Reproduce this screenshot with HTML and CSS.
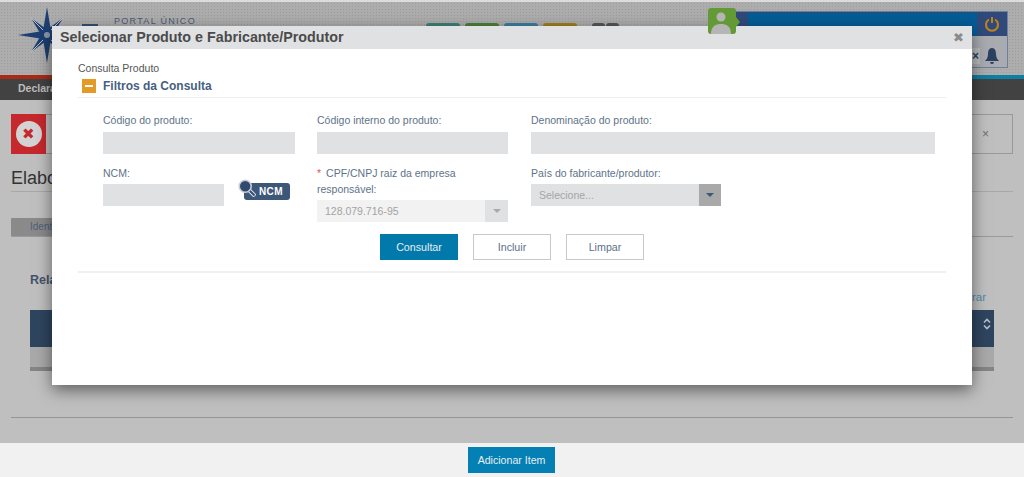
FILE: index.html
```html
<!DOCTYPE html>
<html lang="pt-BR">
<head>
<meta charset="utf-8">
<title>Portal Único</title>
<link rel="stylesheet" href="styles.css">
</head>
<body>
<div class="page">
  <header class="top">
    <div class="brand">
      <svg class="star" viewBox="0 0 58 56" width="58" height="56">
        <path d="M13 11L31 24 25 31zM45 11L27 24 33 31zM13 45L31 32 25 25zM45 45L27 32 33 25z" fill="#1d3f73"/>
        <path d="M13 11L28 26M45 11L30 26M13 45L28 30M45 45L30 30" stroke="#b9c0cc" stroke-width="1"/>
        <path d="M29 0L33 24 58 28 33 32 29 56 25 32 0 28 25 24z" fill="#1d3f73"/>
        <circle cx="29" cy="28" r="3" fill="#8c9ab0"/>
      </svg>
      <span class="brand-mark"></span>
      <span class="brand-text">PORTAL ÚNICO</span>
    </div>
    <div class="tiles">
      <i class="tile t-teal"></i><i class="tile t-green"></i><i class="tile t-blue"></i><i class="tile t-yellow"></i><i class="tile t-dark t-first"></i><i class="tile t-dark"></i>
    </div>
    <div class="user">
      <div class="avatar"><svg viewBox="0 0 28 26" width="28" height="26"><circle cx="13" cy="9" r="4.5" fill="#b5b5b5"/><path d="M3 26c0-8 5-10 10-10s10 2 10 10z" fill="#b5b5b5"/></svg></div>
      <div class="user-box">
        <div class="user-top"><div class="user-bar"></div><svg class="power" viewBox="0 0 16 16" width="16" height="16"><path d="M5 3.5a6 6 0 1 0 6 0M8 1v6" fill="none" stroke="#c2821d" stroke-width="2"/></svg></div>
        <div class="user-low"><span class="user-x">×</span><svg class="bell" viewBox="0 0 14 16" width="14" height="16"><path d="M7 0c3 0 4 3 4 6s1 5 3 7H0c2-2 3-4 3-7s1-6 4-6zM5 14h4a2 2 0 0 1-4 0z" fill="#2c4162"/></svg></div>
      </div>
    </div>
  </header>
  <div class="rule"></div>
  <nav class="nav">Declarações</nav>
  <main class="content">
    <div class="alert">
      <div class="alert-icon"><span class="alert-circle">✖</span></div>
      <span class="alert-close">×</span>
    </div>
    <h1 class="title">Elaborar</h1>
    <div class="tabs"><span class="tab">Identificação</span></div>
    <div class="list-head"><strong class="list-title">Relação</strong><a class="list-link">Filtrar</a></div>
    <div class="table">
      <div class="thead"><svg class="sort" viewBox="0 0 8 12" width="8" height="12"><path d="M1 4.5L4 1.5 7 4.5M1 7.5L4 10.5 7 7.5" fill="none" stroke="#b8bec7" stroke-width="1.6"/></svg></div>
      <div class="tbody"></div>
      <div class="tfoot"></div>
    </div>
    <div class="end-rule"></div>
  </main>
  <footer class="foot"><button class="add-btn">Adicionar Item</button></footer>

  <div class="modal">
    <div class="modal-head"><h2 class="modal-title">Selecionar Produto e Fabricante/Produtor</h2><span class="modal-close">✖</span></div>
    <div class="modal-body">
      <div class="crumb">Consulta Produto</div>
      <div class="section"><span class="collapse"></span><span class="section-title">Filtros da Consulta</span></div>
      <div class="row row-one">
        <div class="field f1"><label>Código do produto:</label><div class="input"></div></div>
        <div class="field f2"><label>Código interno do produto:</label><div class="input"></div></div>
        <div class="field f3"><label>Denominação do produto:</label><div class="input"></div></div>
      </div>
      <div class="row row-two">
        <div class="field f1 ncm-field">
          <label>NCM:</label>
          <div class="ncm-row">
            <div class="input ncm-input"></div>
            <div class="ncm-btn"><svg class="lens" viewBox="0 0 18 18" width="18" height="18"><path d="M11 11l6 6" stroke="#e4e7eb" stroke-width="4"/><path d="M11 11l5.5 5.5" stroke="#2f4a6e" stroke-width="2"/><circle cx="7.2" cy="7.2" r="6" fill="#2f4a6e" stroke="#c9ced6" stroke-width="1.6"/></svg><span class="ncm-tag">NCM</span></div>
          </div>
        </div>
        <div class="field f2">
          <label class="two-line">CPF/CNPJ raiz da empresa responsável:</label>
          <div class="select disabled"><span>128.079.716-95</span><b class="caret"><i></i></b></div>
        </div>
        <div class="field f4">
          <label>País do fabricante/produtor:</label>
          <div class="select pais"><span>Selecione...</span><b class="caret"><i></i></b></div>
        </div>
      </div>
      <div class="actions">
        <button class="btn primary">Consultar</button>
        <button class="btn">Incluir</button>
        <button class="btn">Limpar</button>
      </div>
      <div class="bottom-rule"></div>
    </div>
  </div>
</div>
</body>
</html>
```
FILE: styles.css
```css
* { box-sizing: border-box; }
html, body { margin: 0; padding: 0; }
body { font-family: "Liberation Sans", Arial, sans-serif; background: #bfbfbf; }
.page { position: relative; width: 1024px; height: 477px; overflow: hidden; display: flex; flex-direction: column; }

.top { height: 75px; flex: none; display: flex; align-items: flex-start; border-top: 2px solid #dcdcdc; background-color: #adadad; background-image: radial-gradient(#9d9d9d 35%, transparent 40%); background-size: 3px 3px; position: relative; }
.brand { width: 426px; display: flex; flex: none; padding: 5px 0 0 18px; position: relative; }
.brand-text { font-size: 9px; letter-spacing: 1.3px; color: #4a5b75; margin: 9px 0 0 38px; }
.brand-mark { position: absolute; left: 82px; top: 22px; width: 16px; height: 2px; background: #36506f; }
.tiles { display: flex; gap: 5px; padding-top: 21px; width: 282px; flex: none; }
.tile { width: 34px; height: 8px; border-radius: 3px 3px 0 0; }
.t-teal { background: #3f8078; }
.t-green { background: #4c7e3a; }
.t-blue { background: #3d7da0; }
.t-yellow { background: #9e7f1f; }
.t-dark { background: #555; width: 13px; margin-left: -4px; }
.t-first { margin-left: 10px; }
.user { display: flex; flex: none; padding-top: 6px; }
.avatar { position: relative; width: 28px; height: 26px; background: #639a36; border-radius: 3px; z-index: 1; }
.avatar svg { display: block; }
.avatar::after { content: ""; position: absolute; right: -4px; top: 9px; border-left: 4px solid #639a36; border-top: 5px solid transparent; border-bottom: 5px solid transparent; }
.user-box { width: 273px; height: 57px; margin: 3px 0 0 -1px; background: #a9abb0; border: 1px solid #6c7f9c; }
.user-top { height: 24px; background: #2f4a7a; display: flex; padding: 1px 7px 0 12px; justify-content: space-between; }
.user-bar { width: 229px; height: 23px; background: #045c96; }
.power { margin-top: 3px; }
.user-low { display: flex; justify-content: flex-end; align-items: center; height: 31px; padding: 9px 8px 0 0; gap: 5px; }
.user-x { width: 9px; height: 16px; background: #b8babd; font-size: 12px; font-weight: bold; line-height: 16px; color: #2c4162; text-align: center; }

.rule { height: 4px; flex: none; background: linear-gradient(90deg, #a82b17 0 45%, #0e7ea5 65% 100%); }
.nav { height: 21px; flex: none; background: #424242; color: #bdbdbd; font-size: 10.5px; line-height: 19px; padding-left: 18px; font-weight: bold; }

.content { flex: 1; padding: 14px 0 0 11px; background: #bfbfbf; }
.alert { height: 40px; width: 1002px; border: 1px solid #999; display: flex; justify-content: space-between; align-items: center; padding-right: 23px; }
.alert-icon { width: 35px; height: 40px; margin: -1px 0 -1px -1px; background: #c5282d; display: flex; align-items: center; justify-content: center; }
.alert-circle { width: 26px; height: 26px; border-radius: 50%; background: #d3d3d3; color: #c5282d; font-size: 15px; line-height: 26px; text-align: center; }
.alert-close { font-size: 12px; color: #6e6e6e; }
.title { margin: 12px 0 0; font-size: 18px; font-weight: normal; color: #333; border-bottom: 1px solid #a8a8a8; height: 26px; line-height: 24px; width: 1002px; }
.tabs { margin-top: 26px; border-bottom: 1px solid #9a9a9a; height: 19px; width: 1002px; }
.tab { display: block; width: 60px; height: 18px; background: #8a8a8a; color: #50607a; font-size: 10px; line-height: 18px; padding-left: 19px; border-radius: 1px; }
.list-head { margin: 36px 0 0 19px; height: 30px; display: flex; justify-content: space-between; width: 964px; padding-right: 8px; }
.list-title { color: #44536b; font-size: 12.5px; line-height: 15px; }
.list-link { color: #4d8ba8; font-size: 11.5px; margin-top: 18px; line-height: 13px; }
.table { margin: 7px 0 0 19px; width: 964px; }
.thead { height: 37px; background: #2e4560; text-align: right; padding: 6px 3px 0 0; }
.sort { display: inline-block; }
.tbody { height: 20px; background: #a9a9a9; }
.tfoot { height: 4px; background: #858585; }
.end-rule { margin-top: 46px; height: 1px; width: 1002px; background: #959595; }

.foot { height: 34px; flex: none; background: #f2f1f2; display: flex; justify-content: center; align-items: center; padding-right: 1px; }
.add-btn { width: 87px; height: 26px; background: #0480b4; color: #e8eef2; border: 0; padding: 0; font: 10.6px "Liberation Sans", Arial, sans-serif; }

.modal { position: absolute; left: 52px; top: 26px; width: 920px; height: 359px; background: #fff; box-shadow: 0 5px 15px rgba(0,0,0,.5); }
.modal-head { height: 23px; background: #e0e1e3; display: flex; justify-content: space-between; align-items: center; padding: 0 8px 2px 8px; }
.modal-title { margin: 0; font-size: 14.3px; font-weight: bold; color: #4b4b4b; line-height: 20px; }
.modal-close { font-size: 13px; color: #8a8a8a; margin-top: 2px; }
.modal-body { padding: 13px 26px 0; }
.crumb { font-size: 10.5px; color: #555; line-height: 12px; }
.section { display: flex; align-items: center; gap: 7px; height: 24px; padding-left: 4px; border-bottom: 1px solid #eeeeee; }
.collapse { width: 14px; height: 14px; background: #e39a26; position: relative; display: block; margin-top: 1px; }
.collapse::after { content: ""; position: absolute; left: 3px; right: 3px; top: 6px; height: 2px; background: #fff; }
.section-title { font-size: 12px; font-weight: bold; color: #46607f; margin-top: 1px; }
.row { display: flex; padding-left: 25px; }
.row-one { margin-top: 14px; height: 42px; }
.row-two { margin-top: 11px; height: 57px; }
.field label { display: block; font-size: 10.5px; color: #5e7389; line-height: 16px; }
.f1 { width: 214px; }
.f2 { width: 214px; }
.f3 { width: 404px; }
.f4 { width: 190px; }
.f1 .input { width: 192px; }
.f2 .input { width: 191px; }
.f3 .input { width: 404px; }
.input { height: 22px; margin-top: 4px; background: #e0e1e3; }
.ncm-row { display: flex; align-items: flex-start; }
.ncm-row .input { width: 121px; margin-top: 3px; }
.ncm-btn { position: relative; margin-left: 20px; margin-top: 2px; width: 46px; height: 17px; }
.lens { position: absolute; left: -6px; top: -4px; z-index: 1; }
.ncm-tag { display: block; height: 17px; padding-left: 15px; background: #3d5778; color: #fff; font-size: 10px; font-weight: bold; letter-spacing: .4px; line-height: 17px; border-radius: 3px; }
.two-line { width: 175px; }
.two-line::before { content: "*"; color: #e35757; margin-right: 5px; }
.select { height: 22px; display: flex; justify-content: space-between; align-items: center; font-size: 10.5px; padding-left: 8px; }
.select.disabled { width: 191px; margin-top: 3px; background: #f2f2f2; color: #a3a3a3; }
.select.pais { width: 190px; margin-top: 3px; background: #e0e1e3; color: #a5a5a5; }
.caret { width: 23px; height: 22px; display: flex; align-items: center; justify-content: center; }
.disabled .caret { background: #e0e1e3; }
.pais .caret { width: 22px; background: #a9a9a9; }
.caret i { width: 0; height: 0; border: 4px solid transparent; border-top-color: #aaa; border-bottom: 0; }
.pais .caret i { border-top-color: #3d5778; }
.actions { display: flex; justify-content: center; gap: 15px; margin-top: 12px; }
.btn { width: 78px; height: 26px; padding: 0; background: #fff; border: 1px solid #c9c9c9; color: #5e7085; font: 10.7px "Liberation Sans", Arial, sans-serif; }
.btn.primary { background: #0279ab; border-color: #0279ab; color: #e8eef2; }
.bottom-rule { margin-top: 11px; height: 2px; background: #f0f0f0; }
```
